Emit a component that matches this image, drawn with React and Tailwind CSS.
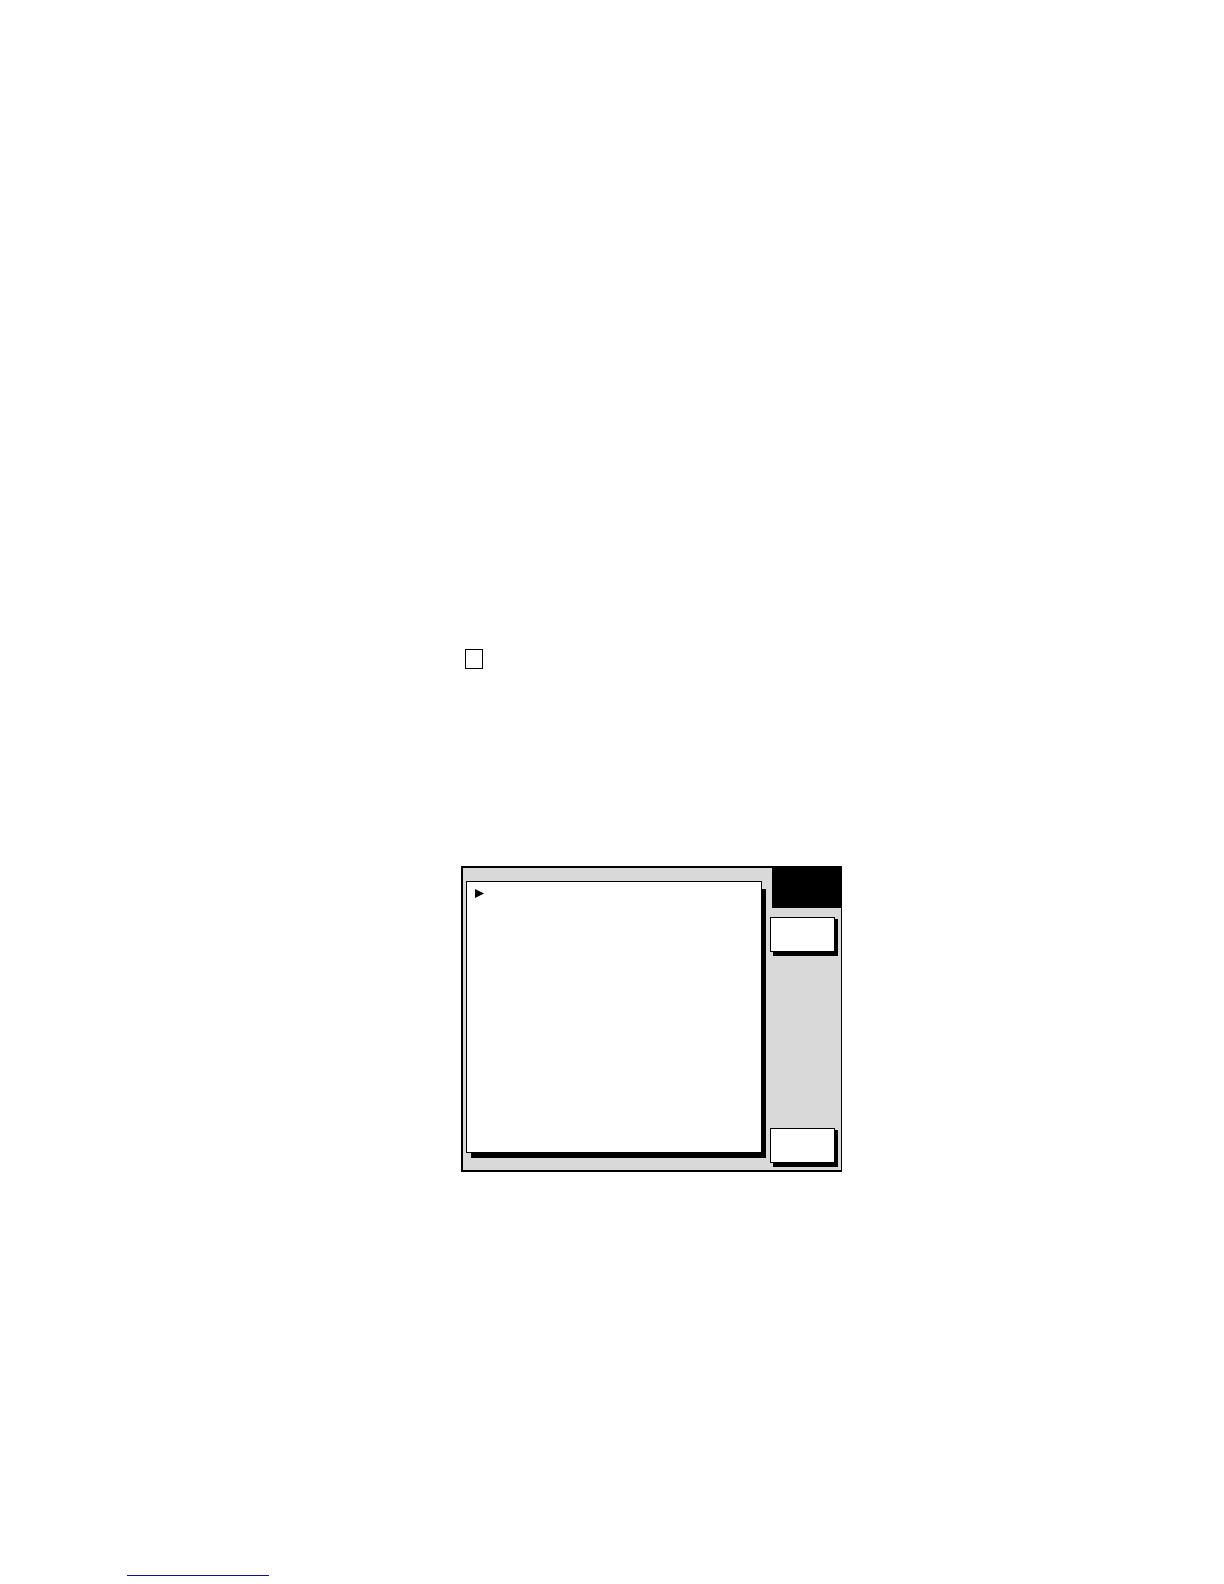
import React from "react";

const SoftKey = ({ label }) => {
  return (
    <button
      type="button"
      aria-label={label}
      className="relative block h-[35px] w-[65px] border border-black bg-white before:absolute before:top-px before:-right-1 before:-bottom-[5px] before:left-0.5 before:-z-10 before:bg-black"
    />
  );
};

const MenuPanel = () => {
  return (
    <div className="relative mt-[13px] mb-[17px] ml-[3px] h-[272px] flex-1 border border-black bg-white pt-[7px] pl-2 before:absolute before:top-[7px] before:-right-[5px] before:-bottom-1.5 before:left-1 before:-z-10 before:bg-black">
      {/* cursor on the first row */}
      <svg className="block h-[9px] w-[9px]" viewBox="0 0 9 9" fill="black">
        <path d="M0 0L9 4.5L0 9Z" />
      </svg>
    </div>
  );
};

const Screen = () => {
  return (
    <div className="isolate flex w-[381px] border-2 border-r border-black bg-[#d9d9d9]">
      <MenuPanel />
      <div className="ml-2 flex w-[71px] flex-col pb-[7px]">
        <div className="ml-0.5 h-10 bg-black" />
        <div className="mt-[9px] flex flex-1 flex-col justify-between">
          <SoftKey label="Select" />
          <SoftKey label="Return" />
        </div>
      </div>
    </div>
  );
};

const App = () => {
  return (
    <div className="flex min-h-screen flex-col bg-white">
      <main className="pt-[649px] pl-[461px]">
        <input
          type="checkbox"
          aria-label="Step"
          className="mb-[197px] ml-1 block h-5 w-[18px] appearance-none border border-black bg-white"
        />
        <Screen />
      </main>
      <footer className="mt-auto pb-2 pl-[127px]">
        <a
          href="#top"
          aria-label="Back to top"
          className="block w-[142px] border-b border-[#12128a]"
        />
      </footer>
    </div>
  );
};

export default App;
